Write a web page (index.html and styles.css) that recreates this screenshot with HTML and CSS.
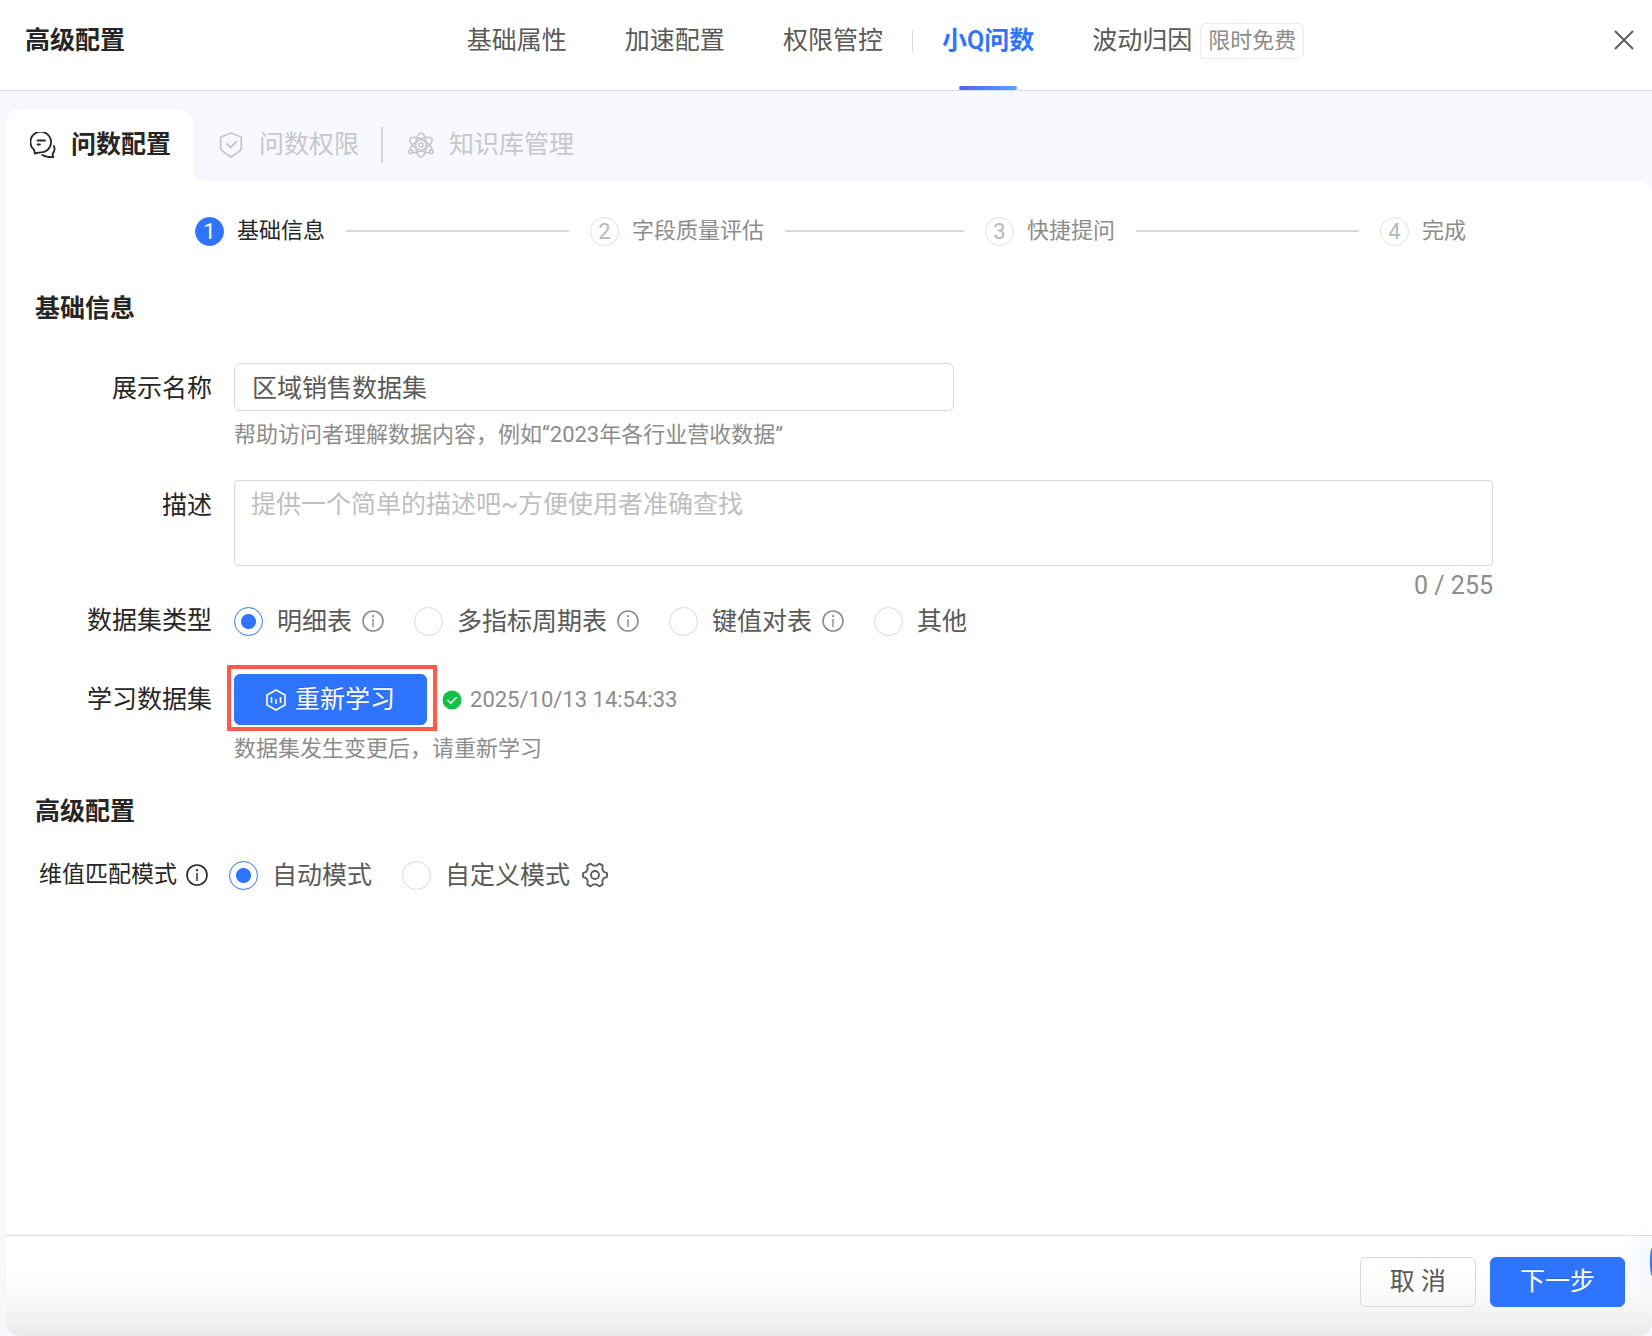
FILE: index.html
```html
<!DOCTYPE html>
<html lang="zh-CN">
<head>
    <meta charset="UTF-8">
    <meta name="viewport" content="width=device-width, initial-scale=1.0">
    <title>高级配置</title>
    <link rel="stylesheet" href="styles.css">
</head>
<body>
    <!-- shared icons -->
    <svg class="sprite" aria-hidden="true">
        <symbol id="icon-info" viewBox="0 0 22 22">
            <circle cx="11" cy="11" r="10" fill="none" stroke="currentColor" stroke-width="1.6"/>
            <circle cx="11" cy="6.2" r="1.1" fill="currentColor"/>
            <path d="M11 9v8" stroke="currentColor" stroke-width="1.4"/>
        </symbol>
    </svg>

    <header class="header">
        <h1 class="title">高级配置</h1>
        <nav class="nav">
            <a href="#">基础属性</a>
            <a href="#">加速配置</a>
            <a href="#">权限管控</a>
            <span class="nav-divider"></span>
            <a href="#" class="active">小Q问数</a>
            <a href="#">波动归因<span class="badge">限时免费</span></a>
        </nav>
        <button type="button" class="close" aria-label="关闭">
            <svg width="20" height="20" viewBox="0 0 20 20" fill="none" stroke="currentColor" stroke-width="1.8"><path d="M1 1l18 18M19 1L1 19"/></svg>
        </button>
    </header>

    <nav class="tabs">
        <a href="#" class="tab active">
            <svg width="26" height="26" viewBox="0 0 26 26" fill="none" stroke="currentColor" stroke-width="1.8" stroke-linecap="round" stroke-linejoin="round"><path d="M4.800 21.500L4.200 18A10.300 10.300 0 1 1 12.500 20.200Q9 20.500 4.800 21.500z"/><path d="M7.500 8.500h7.500M7.500 12.500h2.500"/><path d="M23.800 14c1.300 2.500 .8 5.500-1.300 8l.8 3.200c-4 .2-8-.5-11-2.200"/></svg>
            问数配置
        </a>
        <a href="#" class="tab">
            <svg width="26" height="26" viewBox="0 0 26 26" fill="none" stroke="currentColor" stroke-width="1.8" stroke-linejoin="round"><path d="M13 1l10.300 4v11.500c0 2.500-6 5.500-10.300 8.500-4.300-3-10.300-6-10.300-8.500V5z"/><path d="M8.500 11.500l4 4 6.500-6.500"/></svg>
            问数权限
        </a>
        <span class="tab-divider"></span>
        <a href="#" class="tab">
            <svg width="26" height="26" viewBox="0 0 26 26" fill="none" stroke="currentColor" stroke-width="1.600"><ellipse cx="13" cy="13" rx="5.200" ry="12"/><ellipse cx="13" cy="13" rx="5.200" ry="12.500" transform="rotate(60 13 13)"/><ellipse cx="13" cy="13" rx="5.200" ry="12.500" transform="rotate(120 13 13)"/><circle cx="13" cy="13" r="2"/><circle class="dot" cx="2.800" cy="19.800" r="1.900"/><circle class="dot" cx="23.200" cy="19.800" r="1.900"/></svg>
            知识库管理
        </a>
    </nav>

    <main class="panel">
        <ol class="steps">
            <li class="step active"><span class="num">1</span>基础信息</li>
            <li class="step"><span class="num">2</span>字段质量评估</li>
            <li class="step"><span class="num">3</span>快捷提问</li>
            <li class="step"><span class="num">4</span>完成</li>
        </ol>

        <form class="form">
            <h2>基础信息</h2>
            <div class="form-row">
                <label class="label" for="name">展示名称</label>
                <div class="field">
                    <input type="text" id="name" class="text-input" value="区域销售数据集">
                    <p class="help">帮助访问者理解数据内容，例如“2023年各行业营收数据”</p>
                </div>
            </div>
            <div class="form-row desc-row">
                <label class="label" for="desc">描述</label>
                <div class="field">
                    <textarea id="desc" class="textarea" placeholder="提供一个简单的描述吧~方便使用者准确查找"></textarea>
                    <div class="counter">0 / 255</div>
                </div>
            </div>
            <div class="form-row type-row" role="radiogroup" aria-labelledby="type-label">
                <span class="label" id="type-label">数据集类型</span>
                <div class="radios">
                    <label class="radio"><input type="radio" name="type" checked><span>明细表</span><svg class="info"><use href="#icon-info"/></svg></label>
                    <label class="radio"><input type="radio" name="type"><span>多指标周期表</span><svg class="info"><use href="#icon-info"/></svg></label>
                    <label class="radio"><input type="radio" name="type"><span>键值对表</span><svg class="info"><use href="#icon-info"/></svg></label>
                    <label class="radio"><input type="radio" name="type"><span>其他</span></label>
                </div>
            </div>
            <div class="form-row">
                <label class="label" for="learn">学习数据集</label>
                <div class="field">
                    <div class="learn">
                        <span class="highlight">
                            <button type="button" id="learn" class="btn primary">
                                <svg width="20" height="22" viewBox="0 0 20 22" fill="none" stroke="currentColor" stroke-width="1.600" stroke-linejoin="round"><path d="M10 1l9 5v10l-9 5-9-5V6z"/><path d="M5.500 8v6M10 10v5M14.500 8v6"/></svg>
                                重新学习
                            </button>
                        </span>
                        <svg class="ok" width="20" height="20" viewBox="0 0 20 20"><circle cx="10" cy="10" r="9.500" fill="#12c247"/><path d="M5.500 10l3.200 3.200 6-6" fill="none" stroke="#fff" stroke-width="1.600"/></svg>
                        <time class="time">2025/10/13 14:54:33</time>
                    </div>
                    <p class="help">数据集发生变更后，请重新学习</p>
                </div>
            </div>

            <h2>高级配置</h2>
            <div class="mode-row" role="radiogroup" aria-labelledby="mode-label">
                <span class="mode-label" id="mode-label">维值匹配模式<svg class="info"><use href="#icon-info"/></svg></span>
                <div class="radios">
                    <label class="radio"><input type="radio" name="mode" checked><span>自动模式</span></label>
                    <label class="radio"><input type="radio" name="mode"><span>自定义模式</span>
                        <svg class="gear" width="26" height="26" viewBox="0 0 26 26" fill="none" stroke="currentColor" stroke-width="1.800" stroke-linejoin="round"><path d="M25 11v4L21.800 16.200 20.300 18.800 20.700 22.400 17.300 24.400 14.500 22.300H11.500L8.700 24.400 5.300 22.400 5.700 18.800 4.200 16.200 1 15V11L4.200 9.800 5.700 7.200 5.300 3.600 8.700 1.600 11.500 3.700H14.500L17.300 1.600 20.700 3.600 20.300 7.200 21.800 9.800z"/><circle cx="13" cy="13" r="4"/></svg>
                    </label>
                </div>
            </div>
        </form>

        <footer class="footer">
            <button type="button" class="btn cancel">取 消</button>
            <button type="button" class="btn primary next">下一步</button>
        </footer>
    </main>
    <div class="float-ball"></div>
</body>
</html>
```
FILE: styles.css
```css
* { box-sizing: border-box; }
body { display: flex; flex-direction: column; min-height: 100vh; margin: 0; position: relative; background: #f6f8fd; color: #262626; font: 25px/36px Roboto, "Noto Sans CJK SC", sans-serif; }
h1, h2, p, ol { margin: 0; padding: 0; }
a { color: inherit; text-decoration: none; }
button, input, textarea { font: inherit; }
.sprite { position: absolute; width: 0; height: 0; }

.header { display: grid; grid-template-columns: 1fr auto 1fr; height: 91px; padding: 0 18px 0 25px; background: #fff; border-bottom: 1px solid #d9dadd; }
.title { font-size: 25px; font-weight: 600; line-height: 82px; }
.nav { display: flex; gap: 58px; color: #595959; }
.nav a { position: relative; display: flex; align-items: center; padding-bottom: 8px; }
.nav .active { color: #2e74ff; font-weight: 600; }
.nav .active::after { content: ""; position: absolute; left: 50%; bottom: 0; width: 58px; height: 4px; margin-left: -29px; border-radius: 2px; background: linear-gradient(90deg, #5b5bf8, #53a5ff); }
.nav-divider { width: 1px; height: 24px; margin: 29px -29px; background: #dcdcdc; }
.badge { position: absolute; left: 100%; top: 23px; height: 36px; margin-left: 8px; padding: 0 7px; border: 1px solid #ececec; border-radius: 6px 6px 6px 0; color: #8c8c8c; font-size: 22px; line-height: 34px; white-space: nowrap; }
.close { display: flex; justify-self: end; align-items: center; width: 20px; height: 80px; padding: 0; border: 0; background: none; color: #595959; cursor: pointer; }

.tabs { display: flex; align-items: center; height: 90px; padding: 18px 0 0 6px; color: #c6c7cb; }
.tab { position: relative; display: flex; align-items: center; gap: 15px; height: 72px; padding: 0 22px 0 25px; }
.tab.active { background: #fff; color: #262626; font-weight: 600; border-radius: 14px 14px 0 0; padding-left: 24px; }
.tab.active::after { content: ""; position: absolute; left: 100%; bottom: 0; width: 8px; height: 8px; background: radial-gradient(circle at 100% 0, transparent 7px, #fff 8px); }
.tab-divider { width: 2px; height: 36px; background: #d5d7dc; }
.dot { fill: #f6f8fd; }

.panel { flex: 1; display: flex; flex-direction: column; margin-left: 6px; background: #fff; border-radius: 0 14px 14px 14px; }
.steps { display: flex; padding: 35px 186px 0 189px; list-style: none; font-size: 22px; line-height: 30px; color: #8c8c8c; }
.step { display: flex; align-items: center; flex: 1; white-space: nowrap; }
.step:last-child { flex: none; }
.step:not(:last-child)::after { content: ""; flex: 1; height: 2px; margin: 0 21px; background: #d9d9d9; }
.step.active { color: #262626; }
.num { width: 29px; height: 29px; margin-right: 13px; border: 1px solid #e0e0e0; border-radius: 50%; text-align: center; line-height: 27px; color: #b8b8b8; }
.step.active .num { background: #2e74ff; border-color: #2e74ff; color: #fff; }

.form { flex: 1; padding-top: 45px; }
h2 { margin: 0 0 36px 29px; font-size: 25px; font-weight: 600; line-height: 36px; }
.form-row { display: grid; grid-template-columns: 206px 1fr; gap: 22px; margin-bottom: 29px; padding-right: 159px; }
.label { text-align: right; line-height: 52px; }
.text-input { display: block; width: 100%; max-width: 720px; height: 48px; padding: 0 17px 2px; border: 1px solid #d9d9d9; border-radius: 6px; color: #595959; outline: none; }
.help { margin-top: 8px; font-size: 22px; line-height: 32px; color: #8c8c8c; }
.textarea { display: block; width: 100%; height: 86px; padding: 6px 16px; border: 1px solid #d9d9d9; border-radius: 4px; resize: none; outline: none; }
.textarea::placeholder { color: #bfbfbf; opacity: 1; }
.counter { height: 38px; line-height: 40px; text-align: right; color: #8c8c8c; }
.desc-row { margin-bottom: 0; }

.type-row { margin-bottom: 36px; }
.type-row .label { line-height: 34px; }
.radios { display: flex; gap: 30px; color: #595959; line-height: 32px; }
.radio { display: flex; align-items: center; }
.radio span { padding-top: 2px; }
.radio input { appearance: none; width: 29px; height: 29px; margin: 0 14px 0 0; border: 1px solid #d9d9d9; border-radius: 50%; background: #fff; }
.radio input:checked { border-color: #2e74ff; background: radial-gradient(circle, #2e74ff 7px, #fff 8px); }
.info { width: 22px; height: 22px; margin-left: 10px; color: #8c8c8c; }
.gear { margin-left: 12px; }

.learn { display: flex; align-items: center; }
.highlight { position: relative; }
/* red frame around the re-learn button */
.highlight::after { content: ""; position: absolute; inset: -9px -10px -6px -7px; border: 4px solid #ff5a4c; pointer-events: none; }
.btn { display: flex; align-items: center; justify-content: center; height: 51px; padding: 0 31px; border: 1px solid #d9d9d9; border-radius: 6px; background: #fff; color: #595959; cursor: pointer; }
.btn.primary { gap: 9px; border-color: #2e74ff; background: #2e74ff; color: #fff; text-shadow: 0 -1px 0 rgba(0,0,0,0.12); }
.ok { margin-left: 15px; }
.time { margin-left: 8px; font-size: 22px; color: #8c8c8c; }

.mode-row { display: flex; align-items: center; gap: 21px; margin: -8px 0 0 33px; }
.mode-label { display: flex; align-items: center; font-size: 23px; line-height: 32px; }
.mode-label .info { margin-left: 9px; color: #262626; }

.footer { display: flex; justify-content: flex-end; gap: 14px; height: 101px; padding: 21px 27px 0; border-top: 1px solid #dcdee0; border-radius: 0 0 14px 14px; background: linear-gradient(180deg, #fff 30%, #fafafa 60%, #eaeaea); }
.footer .btn { height: 50px; padding: 0 29px; }
.footer .cancel { background: transparent; }

/* edge of the floating assistant button */
.float-ball { position: absolute; right: 0; bottom: 60px; width: 2px; height: 28px; border-radius: 2px 0 0 2px / 14px 0 0 14px; background: #2e74ff; box-shadow: 0 0 24px 8px rgba(46,116,255,0.12); }
```
